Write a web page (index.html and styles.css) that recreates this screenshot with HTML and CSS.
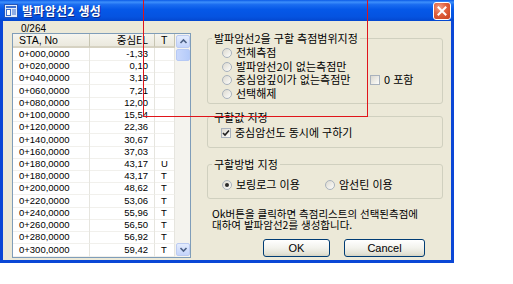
FILE: index.html
```html
<!DOCTYPE html>
<html lang="ko">
<head>
<meta charset="utf-8">
<title>발파암선2 생성</title>
<link rel="stylesheet" href="styles.css">
</head>
<body>
<div class="window">
  <div class="titlebar">
    <svg class="app-icon" width="14" height="14" viewBox="0 0 14 14">
      <rect x="0.5" y="0.5" width="13" height="13" fill="#e4ecfa" stroke="#2455b8"/>
      <rect x="2" y="2" width="10" height="2" fill="#3a6fd0"/>
      <rect x="2.5" y="5.5" width="4" height="6" fill="#fff" stroke="#3a6fd0"/>
      <path d="M8 6h4M8 8h4M8 10h4" stroke="#3a6fd0" stroke-width="1"/>
    </svg>
    <span class="title">발파암선2 생성</span>
    <div class="close">
      <svg width="10" height="10" viewBox="0 0 10 10"><path d="M1.5 1.5L8.5 8.5M8.5 1.5L1.5 8.5" stroke="#fff" stroke-width="2" stroke-linecap="square"/></svg>
    </div>
  </div>
  <div class="client">
    <div class="left">
      <div class="count">0/264</div>
      <div class="listbox">
        <div class="table">
          <div class="head">
            <div class="c1">STA, No</div>
            <div class="c2">중심EL</div>
            <div class="c3">T</div>
          </div>
          <div class="row"><div class="c1">0+000,0000</div><div class="c2">-1,33</div><div class="c3"></div></div>
          <div class="row"><div class="c1">0+020,0000</div><div class="c2">0,10</div><div class="c3"></div></div>
          <div class="row"><div class="c1">0+040,0000</div><div class="c2">3,19</div><div class="c3"></div></div>
          <div class="row"><div class="c1">0+060,0000</div><div class="c2">7,21</div><div class="c3"></div></div>
          <div class="row"><div class="c1">0+080,0000</div><div class="c2">12,00</div><div class="c3"></div></div>
          <div class="row"><div class="c1">0+100,0000</div><div class="c2">15,54</div><div class="c3"></div></div>
          <div class="row"><div class="c1">0+120,0000</div><div class="c2">22,36</div><div class="c3"></div></div>
          <div class="row"><div class="c1">0+140,0000</div><div class="c2">30,67</div><div class="c3"></div></div>
          <div class="row"><div class="c1">0+160,0000</div><div class="c2">37,03</div><div class="c3"></div></div>
          <div class="row"><div class="c1">0+180,0000</div><div class="c2">43,17</div><div class="c3">U</div></div>
          <div class="row"><div class="c1">0+180,0000</div><div class="c2">43,17</div><div class="c3">T</div></div>
          <div class="row"><div class="c1">0+200,0000</div><div class="c2">48,62</div><div class="c3">T</div></div>
          <div class="row"><div class="c1">0+220,0000</div><div class="c2">53,06</div><div class="c3">T</div></div>
          <div class="row"><div class="c1">0+240,0000</div><div class="c2">55,96</div><div class="c3">T</div></div>
          <div class="row"><div class="c1">0+260,0000</div><div class="c2">56,50</div><div class="c3">T</div></div>
          <div class="row"><div class="c1">0+280,0000</div><div class="c2">56,92</div><div class="c3">T</div></div>
          <div class="row"><div class="c1">0+300,0000</div><div class="c2">59,42</div><div class="c3">T</div></div>
        </div>
        <div class="scrollbar">
          <div class="sbtn">
            <svg width="9" height="7" viewBox="0 0 9 7"><path d="M1.5 5L4.5 2L7.5 5" fill="none" stroke="#4d6185" stroke-width="1.6"/></svg>
          </div>
          <div class="thumb"></div>
          <div class="track"></div>
          <div class="sbtn">
            <svg width="9" height="7" viewBox="0 0 9 7"><path d="M1.5 2L4.5 5L7.5 2" fill="none" stroke="#4d6185" stroke-width="1.6"/></svg>
          </div>
        </div>
      </div>
    </div>
    <div class="right">
      <fieldset class="group g1">
        <legend>발파암선2을 구할 측점범위지정</legend>
        <div class="rows grid1">
          <label class="opt r1"><span class="radio"></span>전체측점</label>
          <label class="opt r2"><span class="radio"></span>발파암선2이 없는측점만</label>
          <label class="opt r3"><span class="radio"></span>중심암깊이가 없는측점만</label>
          <label class="opt r4"><span class="radio"></span>선택해제</label>
          <label class="opt chk0"><span class="check"></span>0 포함</label>
        </div>
      </fieldset>
      <fieldset class="group g2">
        <legend>구할값 지정</legend>
        <div class="rows">
          <label class="opt"><span class="check checked"><svg width="8" height="8" viewBox="0 0 8 8"><path d="M1 4L3 6L7 1.5" fill="none" stroke="#222" stroke-width="1.6"/></svg></span>중심암선도 동시에 구하기</label>
        </div>
      </fieldset>
      <fieldset class="group g3">
        <legend>구할방법 지정</legend>
        <div class="rows grid3">
          <label class="opt"><span class="radio on"></span>보링로그 이용</label>
          <label class="opt"><span class="radio"></span>암선틴 이용</label>
        </div>
      </fieldset>
      <p class="note">Ok버튼을 클릭하면 측점리스트의 선택된측점에<br>대하여 발파암선2를 생성합니다.</p>
      <div class="buttons">
        <button class="btn ok">OK</button>
        <button class="btn cancel">Cancel</button>
      </div>
    </div>
  </div>
</div>
<div class="annot"></div>
</body>
</html>
```
FILE: styles.css
```css
* { box-sizing: border-box; }
html, body { margin: 0; padding: 0; background: #fff; }
body {
  font-family: "Noto Sans CJK KR", sans-serif;
  color: #000;
  position: relative;
  width: 513px;
  height: 284px;
  overflow: hidden;
}

.window {
  width: 454px;
  height: 263px;
  display: flex;
  flex-direction: column;
}

.titlebar {
  height: 21px;
  flex: none;
  display: flex;
  align-items: center;
  padding: 0 3px 0 4px;
  background: linear-gradient(to bottom, #0a5ae6 0%, #3d8ffb 10%, #1a6cf0 22%, #0558e8 45%, #0553e0 80%, #0447cf 100%);
}
.app-icon { flex: none; }
.title {
  margin-left: 4px;
  color: #fff;
  font-size: 12px;
  font-weight: bold;
  line-height: 14px;
  text-shadow: 1px 1px 0 #0a2a8a;
  letter-spacing: 0.3px;
}
.close {
  margin-left: auto;
  width: 18px;
  height: 18px;
  border: 1px solid #fff;
  border-radius: 3px;
  background: radial-gradient(circle at 35% 30%, #f3a08a 0%, #e0603d 45%, #c8401c 100%);
  display: flex;
  align-items: center;
  justify-content: center;
}

.client {
  flex: 1;
  display: flex;
  gap: 16px;
  background: #ece9d8;
  border: 3px solid #0b47d6;
  border-top: 0;
  padding: 0 8px 0 9px;
}

.left {
  width: 179px;
  flex: none;
  display: flex;
  flex-direction: column;
}
.count {
  height: 12px;
  padding: 3px 0 0 9px;
  font-family: "Liberation Sans", sans-serif;
  font-size: 10px;
  line-height: 10px;
}
.listbox {
  height: 225px;
  border: 1px solid #7f9db9;
  background: #fff;
  display: flex;
}
.table { width: 162px; flex: none; }
.head, .row {
  display: grid;
  grid-template-columns: 77px 65px 20px;
}
.head {
  height: 14px;
  font-family: "Noto Sans CJK KR", sans-serif;
  font-size: 10.5px;
  line-height: 12px;
}
.head > div {
  background: linear-gradient(to bottom, #f6f5ef, #ebe9de);
  border-right: 1px solid #c7c5b2;
  border-bottom: 2px solid #d6d2c2;
}
.head .c1 { padding-left: 6px; font-family: "Liberation Sans", sans-serif; font-size: 10.5px; }
.head .c2 { text-align: right; padding-right: 6px; }
.head .c3 { padding-left: 6px; font-family: "Liberation Sans", sans-serif; }
.row {
  height: 12.23px;
  font-family: "Liberation Sans", sans-serif;
  font-size: 9.5px;
  line-height: 12px;
}
.row > div {
  border-right: 1px solid #e6e5df;
  border-bottom: 1px solid #f1f0ec;
  white-space: nowrap;
}
.row .c1 { padding-left: 6px; }
.row .c2 { text-align: right; padding-right: 6px; }
.row .c3 { padding-left: 6px; }

.scrollbar {
  flex: 1;
  display: flex;
  flex-direction: column;
  background: #f4f3ee;
  padding: 1px 0 1px 1px;
}
.sbtn {
  height: 13px;
  flex: none;
  border: 1px solid #bccbf1;
  border-radius: 2px;
  background: linear-gradient(to bottom, #e4ecfd, #c4d4fb);
  display: flex;
  align-items: center;
  justify-content: center;
}
.thumb {
  height: 12px;
  flex: none;
  margin-top: 1px;
  border: 1px solid #b6c9f5;
  border-radius: 2px;
  background: linear-gradient(to right, #c9d8fc, #b5cbfa);
}
.track { flex: 1; }

.right {
  width: 236px;
  flex: none;
  display: flex;
  flex-direction: column;
  padding-top: 10px;
  font-size: 11px;
}
.group {
  margin: 0;
  padding: 0 4px;
  border: 1px solid #d0d0bf;
  border-radius: 3px;
  min-width: 0;
}
.group legend {
  padding: 0 2px;
  font-size: 11px;
  line-height: 14px;
  height: 14px;
}
.rows { padding-left: 10px; }
.g1 .rows { padding-top: 1px; padding-bottom: 2px; }
.g2 { margin-top: 6px; }
.g2 .rows { padding: 2px 0 8px 9px; }
.g3 { margin-top: 9px; }
.g3 .rows { padding-top: 7px; padding-bottom: 6px; }

.grid1 {
  display: grid;
  grid-template-columns: 148px auto;
  grid-auto-rows: 13.7px;
}
.r1 { grid-column: 1; grid-row: 1; }
.r2 { grid-column: 1; grid-row: 2; }
.r3 { grid-column: 1; grid-row: 3; }
.r4 { grid-column: 1; grid-row: 4; }
.chk0 { grid-column: 2; grid-row: 3; gap: 5px; }
.grid3 {
  display: grid;
  grid-template-columns: 103px auto;
}

.opt {
  display: flex;
  align-items: center;
  gap: 4px;
  height: 13.7px;
  line-height: 13.7px;
  white-space: nowrap;
}
.radio {
  width: 10px;
  height: 10px;
  flex: none;
  border-radius: 50%;
  border: 1px solid #a9b2bd;
  background: linear-gradient(135deg, #dcd9cf, #fdfdfb);
  display: flex;
  align-items: center;
  justify-content: center;
}
.radio.on::after {
  content: "";
  width: 4px;
  height: 4px;
  border-radius: 50%;
  background: #2a2a2a;
}
.check {
  width: 10px;
  height: 10px;
  flex: none;
  border: 1px solid #a9b2bd;
  background: linear-gradient(135deg, #dcd9cf, #fdfdfb);
  display: flex;
  align-items: center;
  justify-content: center;
}

.note {
  margin: 10px 0 0 0;
  padding-left: 5px;
  font-size: 10.5px;
  line-height: 10.5px;
  white-space: nowrap;
}
.buttons {
  margin-top: 9px;
  display: flex;
  justify-content: flex-end;
  gap: 14px;
  padding-right: 18px;
}
.btn {
  height: 18px;
  border: 1px solid #003c74;
  border-radius: 3px;
  background: linear-gradient(to bottom, #ffffff 0%, #f2f2ec 50%, #e3e2d6 85%, #d5d3c3 100%);
  font-family: "Liberation Sans", sans-serif;
  font-size: 11px;
  line-height: 14px;
  color: #000;
  padding: 0;
}
.ok { width: 67px; }
.cancel { width: 81px; }

.annot {
  position: absolute;
  left: 143px;
  top: -2px;
  width: 225px;
  height: 119px;
  border: 1px solid #e0141a;
  border-top: 0;
  pointer-events: none;
}
```
